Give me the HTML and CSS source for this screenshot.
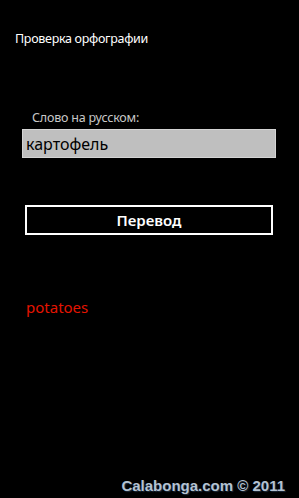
FILE: index.html
```html
<!DOCTYPE html>
<html lang="ru">

<head>
    <meta charset="UTF-8" />
    <meta name="viewport" content="width=device-width, initial-scale=1.0" />
    <title>Проверка орфографии</title>
    <link rel="stylesheet" href="styles.css">
</head>

<body>
    <div class="page">
        <!-- Заголовок приложения -->
        <div class="app-title">Проверка орфографии</div>

        <div class="content">
            <label class="label" for="word">Слово на русском:</label>
            <input type="text" id="word" class="textbox" value="картофель" />

            <button class="translate">Перевод</button>

            <div class="result">potatoes</div>
        </div>

        <div class="footer">Calabonga.com © 2011</div>
    </div>
</body>

</html>
```

FILE: styles.css
```css
html, body {
    margin: 0;
    background: #000;
}

body {
    font-family: "Noto Sans", "Open Sans", sans-serif;
    color: #fff;
}

.page {
    width: 299px;
    height: 498px;
    display: flex;
    flex-direction: column;
}

.app-title {
    font-size: 12.5px;
    letter-spacing: -0.3px;
    line-height: 18px;
    padding: 30px 0 0 15px;
}

.content {
    display: flex;
    flex-direction: column;
    padding: 0 23px 0 22px;
    flex: 1;
}

.label {
    font-size: 12.5px;
    letter-spacing: -0.2px;
    line-height: 16px;
    color: #c8c8c8;
    margin: 62px 0 0 10px;
}

.textbox {
    margin-top: 3px;
    height: 29px;
    box-sizing: border-box;
    border: 1px solid #d4d4d4;
    background: #bfbfbf;
    color: #000;
    font-family: inherit;
    font-size: 16px;
    padding: 0 3px;
    outline: none;
}

.translate {
    margin: 47px 3px 0 3px;
    height: 30px;
    box-sizing: border-box;
    border: 2px solid #fff;
    background: #000;
    color: #fff;
    font-family: inherit;
    font-size: 15px;
    font-weight: 600;
    padding: 0;
}

.result {
    font-size: 15px;
    line-height: 20px;
    color: #e51400;
    margin: 62px 0 0 4px;
}

.footer {
    font-family: "Liberation Sans", Arial, sans-serif;
    font-weight: bold;
    font-size: 15px;
    color: #b4c2d2;
    text-shadow: 1px 1px 1px #1c2a3a;
    text-align: right;
    padding: 0 14px 4px 0;
}
```
